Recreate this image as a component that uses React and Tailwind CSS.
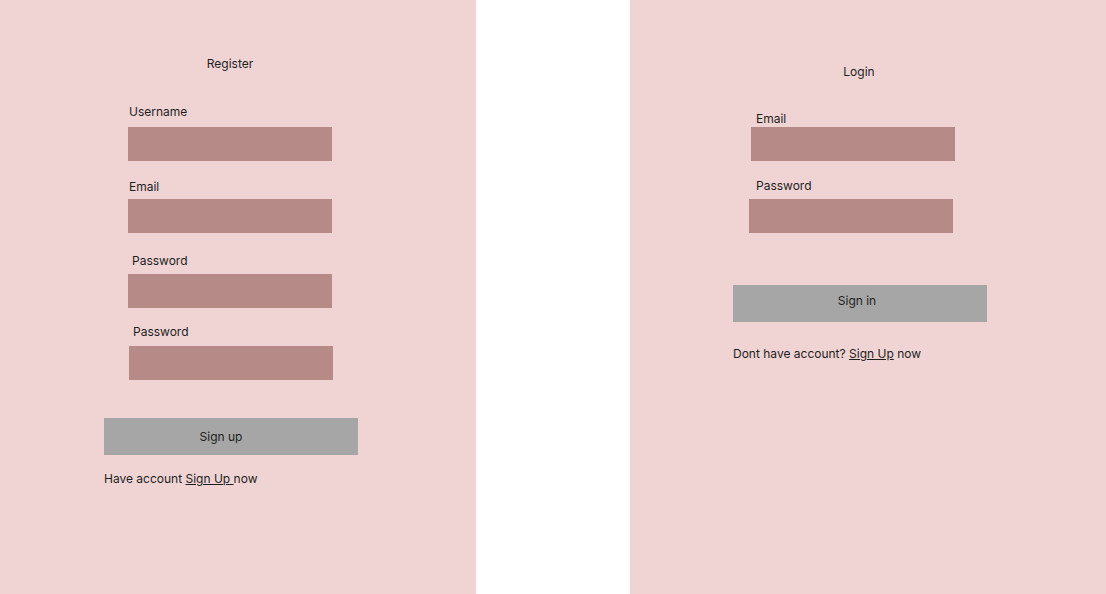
import React from "react";

export default function App() {
  return (
    <div
      className="flex w-[1106px] h-[594px] bg-white text-[12px] leading-[16px] text-[#1e1e1e]"
      style={{ fontFamily: "Inter, 'Noto Sans', sans-serif" }}
    >
      {/* Register panel */}
      <div className="w-[476px] h-full bg-[#f0d4d4] flex flex-col items-start">
        <div className="mt-[56px] ml-[128px] w-[204px] text-center">Register</div>
        <div className="mt-[32px] ml-[129px]">Username</div>
        <div className="mt-[7px] ml-[128px] w-[204px] h-[34px] bg-[#b68a87]" />
        <div className="mt-[18px] ml-[129px]">Email</div>
        <div className="mt-[4px] ml-[128px] w-[204px] h-[34px] bg-[#b68a87]" />
        <div className="mt-[20px] ml-[132px]">Password</div>
        <div className="mt-[5px] ml-[128px] w-[204px] h-[34px] bg-[#b68a87]" />
        <div className="mt-[16px] ml-[133px]">Password</div>
        <div className="mt-[6px] ml-[129px] w-[204px] h-[34px] bg-[#b68a87]" />
        <button className="mt-[38px] ml-[104px] w-[254px] h-[37px] bg-[#a6a6a6] pr-[20px] text-center">
          Sign up
        </button>
        <div className="mt-[16px] ml-[104px] whitespace-pre">
          Have account <span className="underline">Sign Up </span>now
        </div>
      </div>

      <div className="flex-1" />

      {/* Login panel */}
      <div className="w-[476px] h-full bg-[#f0d4d4] flex flex-col items-start">
        <div className="mt-[64px] ml-[127px] w-[204px] text-center">Login</div>
        <div className="mt-[31px] ml-[126px]">Email</div>
        <div className="mt-0 ml-[121px] w-[204px] h-[34px] bg-[#b68a87]" />
        <div className="mt-[17px] ml-[126px]">Password</div>
        <div className="mt-[5px] ml-[119px] w-[204px] h-[34px] bg-[#b68a87]" />
        <button className="mt-[52px] ml-[103px] w-[254px] h-[37px] bg-[#a6a6a6] pr-[6px] pb-[6px] text-center">
          Sign in
        </button>
        <div className="mt-[24px] ml-[103px] whitespace-pre">
          Dont have account? <span className="underline">Sign Up</span> now
        </div>
      </div>
    </div>
  );
}
